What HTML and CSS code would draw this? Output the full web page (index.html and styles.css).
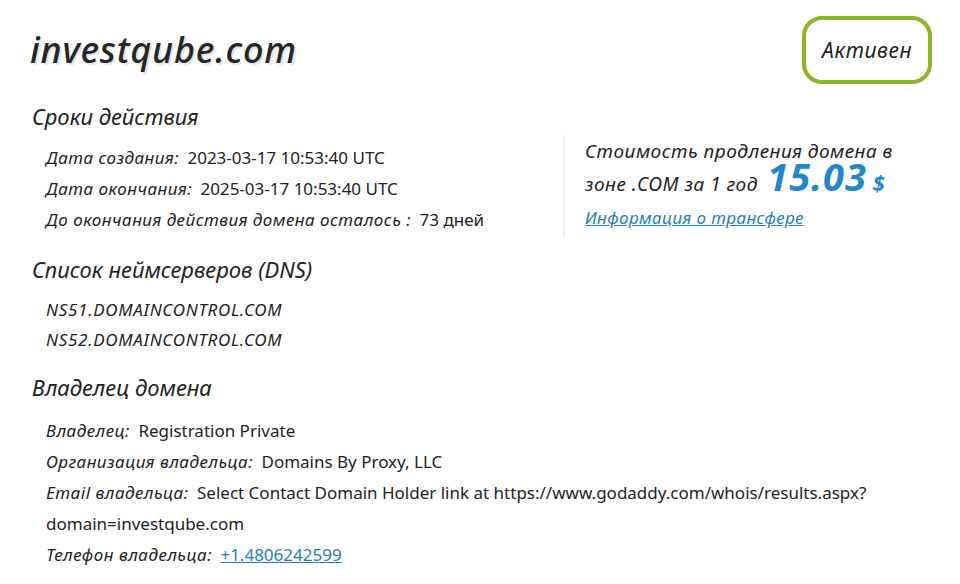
FILE: index.html
```html
<!DOCTYPE html>
<html lang="ru">
<head>
  <meta charset="UTF-8" />
  <meta name="viewport" content="width=device-width, initial-scale=1.0" />
  <title>investqube.com — WHOIS</title>
  <link rel="stylesheet" href="styles.css">
</head>
<body>

  <div class="domain-head">
    <h1 class="domain-name">investqube.com</h1>
    <div class="status">Активен</div>
  </div>

  <div class="section">
    <h2>Сроки действия</h2>
    <div class="terms">
      <ul class="rows">
        <li><span class="label">Дата создания:</span> 2023-03-17 10:53:40 UTC</li>
        <li><span class="label">Дата окончания:</span> 2025-03-17 10:53:40 UTC</li>
        <li><span class="label">До окончания действия домена осталось :</span> 73 дней</li>
      </ul>
      <div class="price">
        <p>Стоимость продления домена в<br>
          зоне .COM за 1 год <span class="sum">15.03</span> <span class="cur">$</span></p>
        <a href="#">Информация о трансфере</a>
      </div>
    </div>
  </div>

  <div class="section">
    <h2>Список неймсерверов (DNS)</h2>
    <ul class="rows ns">
      <li>NS51.DOMAINCONTROL.COM</li>
      <li>NS52.DOMAINCONTROL.COM</li>
    </ul>
  </div>

  <div class="section owner">
    <h2>Владелец домена</h2>
    <ul class="rows">
      <li><span class="label">Владелец:</span> Registration Private</li>
      <li><span class="label">Организация владельца:</span> Domains By Proxy, LLC</li>
      <li><span class="label">Email владельца:</span> Select Contact Domain Holder link at https://www.godaddy.com/whois/results.aspx? domain=investqube.com</li>
      <li><span class="label">Телефон владельца:</span> <a href="#">+1.4806242599</a></li>
    </ul>
  </div>

</body>
</html>
```

FILE: styles.css
```css
body {
  margin: 0;
  padding: 0 28px 0 30px;
  font-family: "Noto Sans", sans-serif;
  color: #222;
  background-color: #fff;
}

.domain-head {
  display: flex;
  justify-content: space-between;
  align-items: flex-start;
  padding-top: 16px;
}

.domain-name {
  margin: 0;
  font-size: 36px;
  line-height: 68px;
  font-style: italic;
  font-weight: 500;
  letter-spacing: 0.8px;
  color: #262626;
  text-shadow: 2px 2px 2px rgba(0, 0, 0, 0.12);
}

.status {
  height: 60px;
  padding: 0 16px;
  border: 4px solid #8cb52a;
  border-radius: 20px;
  font-size: 21px;
  font-style: italic;
  letter-spacing: 0.6px;
  line-height: 60px;
}

.section {
  margin-top: 16px;
}

.section h2 {
  margin: 0;
  padding-left: 2px;
  font-size: 22px;
  font-style: italic;
  font-weight: 400;
  line-height: 32px;
}

.rows {
  list-style: none;
  margin: 10px 0 0;
  padding: 0 0 0 16px;
  font-size: 17px;
  line-height: 31px;
}

.label {
  font-style: italic;
  letter-spacing: 0.5px;
  margin-right: 4px;
}

.ns li {
  font-style: italic;
  letter-spacing: 0.7px;
  line-height: 30px;
}

.owner .rows {
  margin-top: 12px;
}

.terms {
  display: flex;
  align-items: flex-start;
}

.terms .rows {
  width: 517px;
  padding-top: 7px;
  margin-top: 3px;
}

.price {
  margin-top: 3px;
  border-left: 2px solid #f0f0f0;
  padding: 0 0 3px 20px;
  font-style: italic;
  font-size: 19px;
  letter-spacing: 0.5px;
  line-height: 33px;
}

.price p {
  margin: 0;
}

.sum {
  margin-left: 4px;
  font-size: 38px;
  font-weight: 700;
  letter-spacing: 1px;
  line-height: 0;
  color: #2388c9;
}

.cur {
  font-size: 22px;
  font-weight: 700;
  line-height: 0;
  color: #2388c9;
}

a {
  color: #1f80c0;
}

.price a {
  font-size: 17px;
  letter-spacing: 0.4px;
}
```
